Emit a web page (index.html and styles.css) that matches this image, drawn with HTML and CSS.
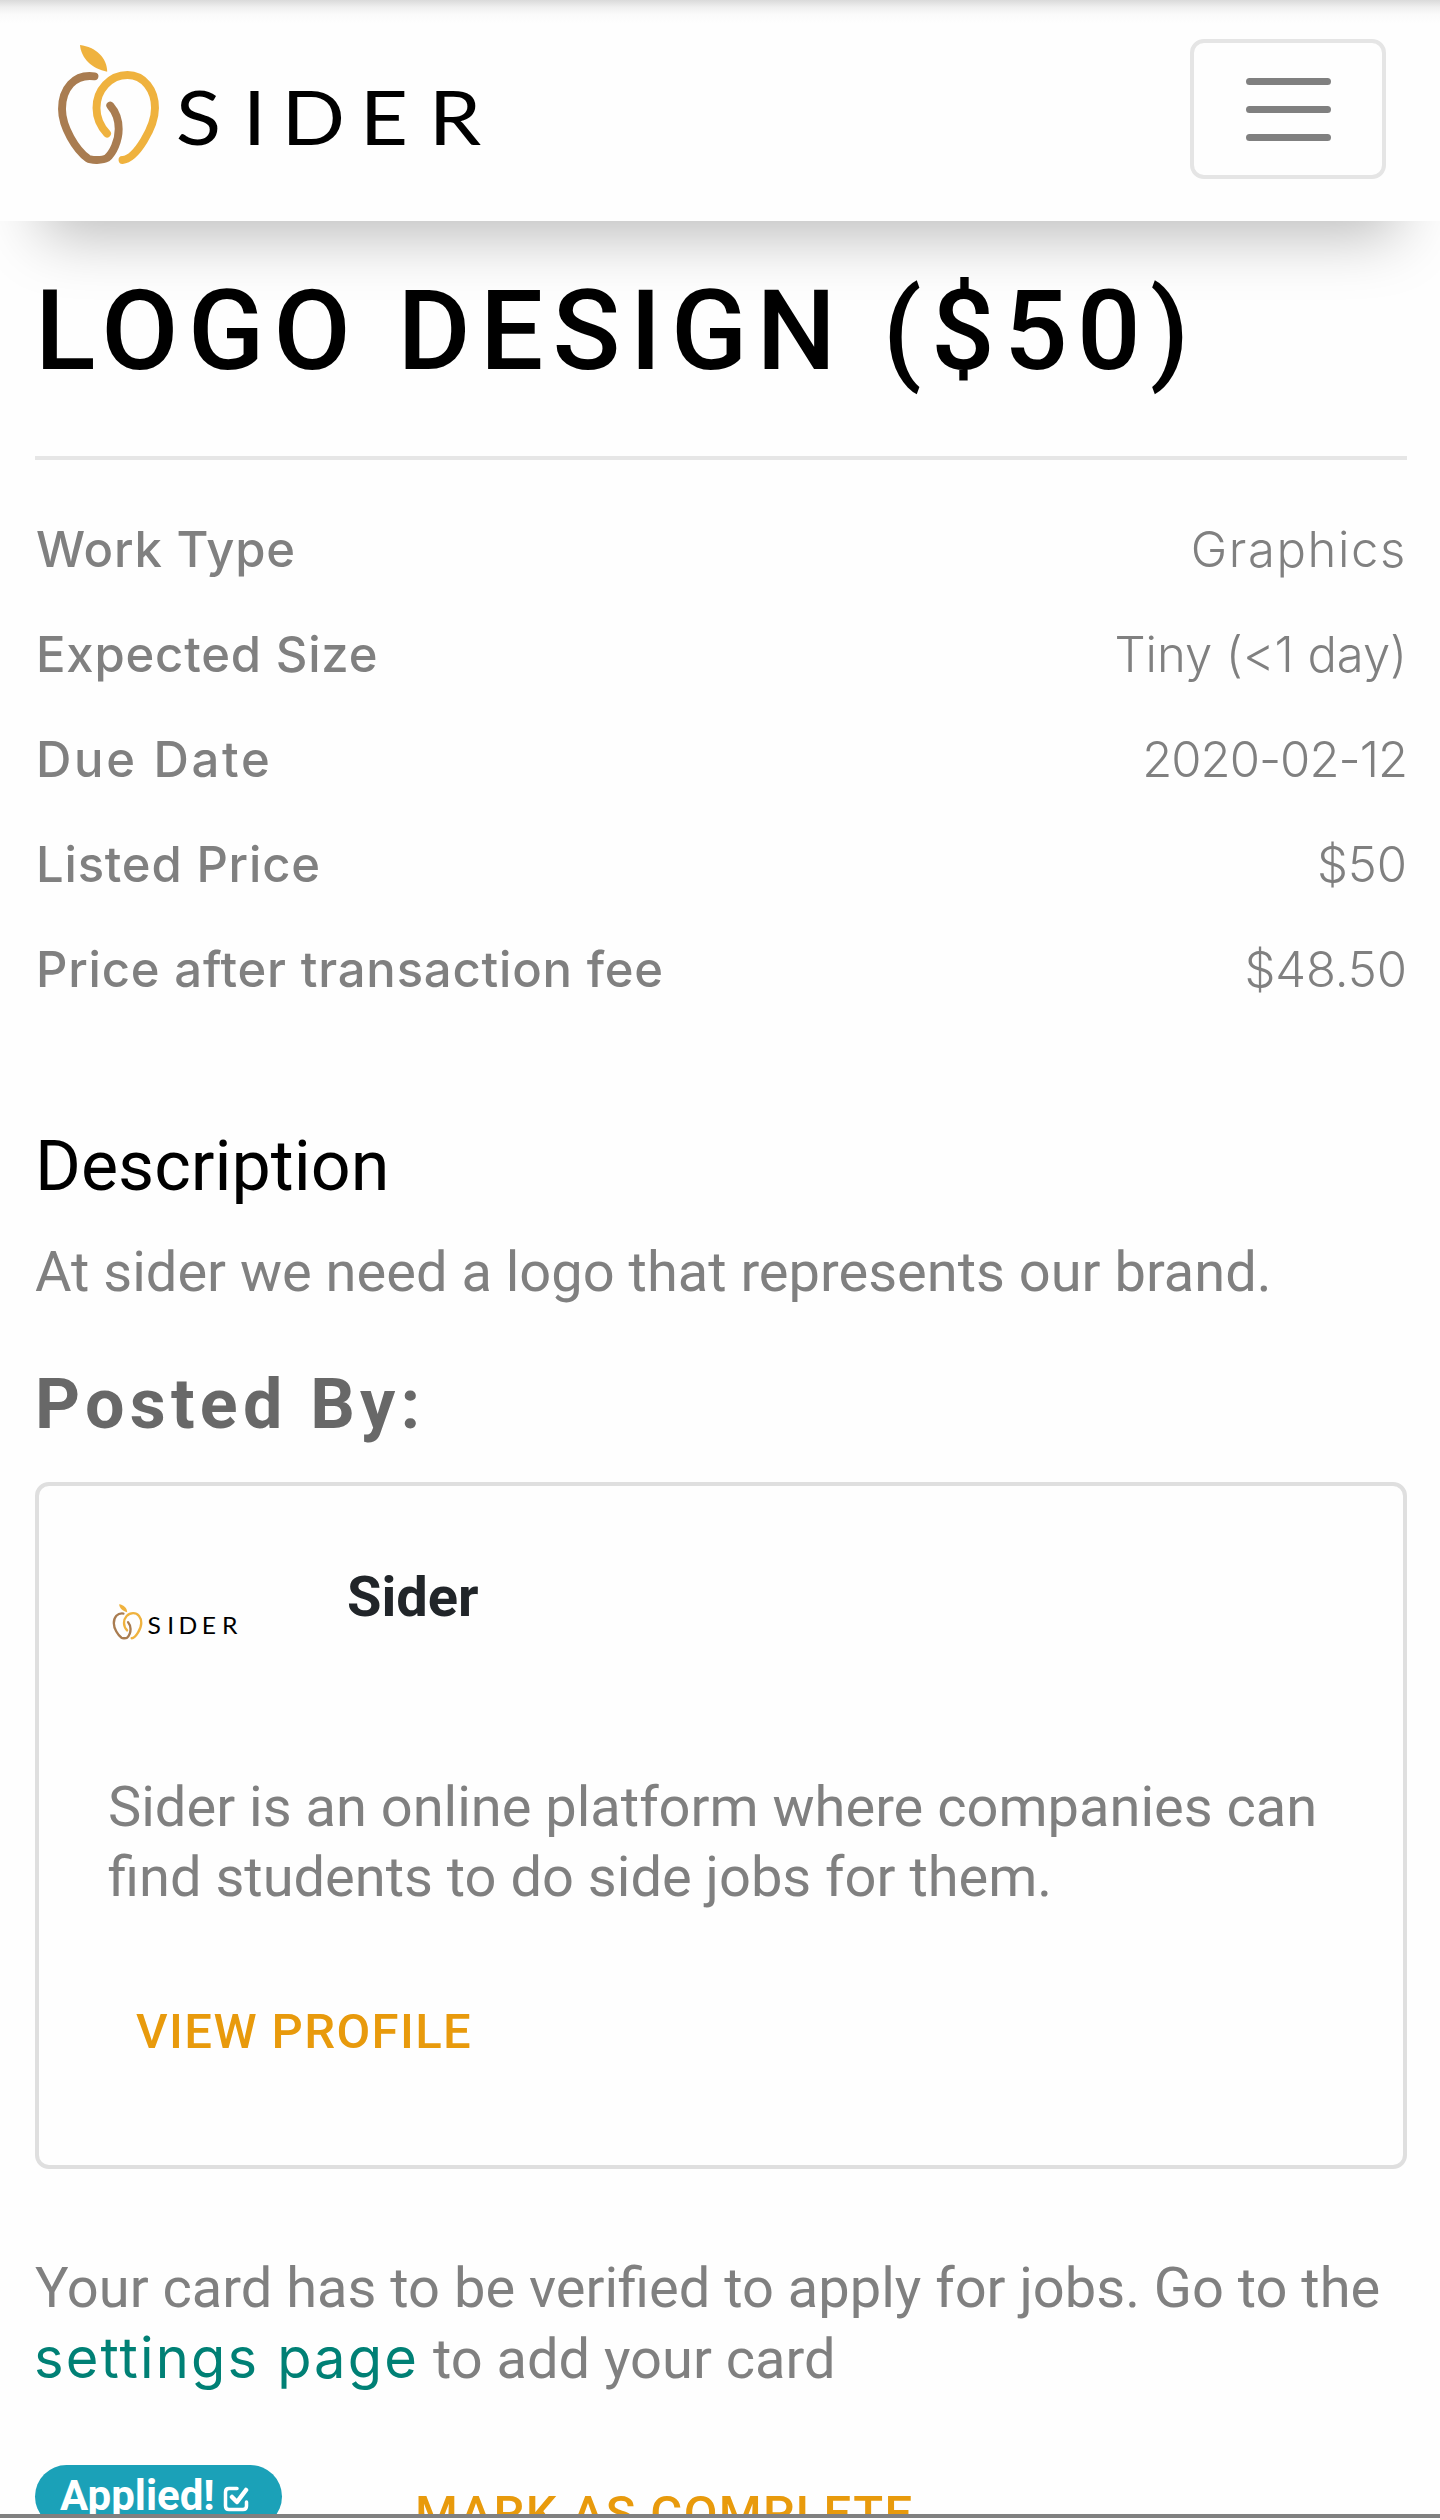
FILE: index.html
```
<!DOCTYPE html>
<html lang="en">
<head>
<meta charset="utf-8">
<title>Sider</title>
<link rel="stylesheet" href="styles.css">
</head>
<body>
<svg class="sprite" aria-hidden="true">
  <symbol id="sider-logo" viewBox="56 44 430 122">
    <path fill="#efb23e" d="M80 45C96 47 107 58 107.200 71.700C92 69 81 58 80 45Z"/>
    <g fill="none" stroke-width="7.900" stroke-linecap="round" stroke-linejoin="round">
      <path stroke="#a97c50" d="M94.500 76.300C74 73.500 62 89 62 109C62 127 76 150 88 158.500C91 160.500 103 160.500 107 158C113 153 118.700 141 118.700 129C118.700 119 115 111 110.300 105.600"/>
      <path stroke="#efb23e" d="M107 133.500C100 126 96.500 117 96.500 108C96.500 90 110 75 127.500 75C144 75 155 90 155 108C155 127 136 159 122.500 160"/>
    </g>
    <text class="wordmark" transform="scale(1.1 1)" x="159.800 220.600 255.800 327 389.700" y="145.300">SIDER</text>
  </symbol>
</svg>

<header class="navbar">
  <svg class="navbar-logo" role="img" aria-label="Sider"><use href="#sider-logo"/></svg>
  <button class="toggler" aria-label="Menu">
    <svg viewBox="0 0 85 64"><path d="M3.500 4.500H81.500M3.500 32.500H81.500M3.500 60.500H81.500"/></svg>
  </button>
</header>

<main class="page">
  <h1 class="title">LOGO DESIGN ($50)</h1>
  <div class="rule"></div>
  <dl class="facts">
    <div class="fact"><dt>Work Type</dt><dd class="word">Graphics</dd></div>
    <div class="fact"><dt>Expected Size</dt><dd>Tiny (&lt;1 day)</dd></div>
    <div class="fact"><dt class="wide">Due Date</dt><dd class="date">2020-02-12</dd></div>
    <div class="fact"><dt>Listed Price</dt><dd>$50</dd></div>
    <div class="fact"><dt>Price after transaction fee</dt><dd>$48.50</dd></div>
  </dl>

  <h2 class="subtitle">Description</h2>
  <p class="text">At sider we need a logo that represents our brand.</p>

  <h2 class="posted">Posted By:</h2>
  <section class="card">
    <div class="card-head">
      <svg class="card-logo" role="img" aria-label="Sider"><use href="#sider-logo"/></svg>
      <h3 class="company">Sider</h3>
    </div>
    <p class="text card-text">Sider is an online platform where companies can find students to do side jobs for them.</p>
    <a class="action">VIEW PROFILE</a>
  </section>

  <p class="text notice">Your card has to be verified to apply for jobs. Go to the <a class="link">settings page</a> to add your card</p>

  <div class="status">
    <span class="badge">Applied!
      <svg viewBox="0 0 26 26"><path d="M14 2.500H6Q2.500 2.500 2.500 6V20Q2.500 23.500 6 23.500H20Q23.500 23.500 23.500 20V16"/><path class="tick" d="M9 11L14 16L23 4"/></svg>
    </span>
    <a class="action">MARK AS COMPLETE</a>
  </div>
</main>
<div class="bottom-edge"></div>
</body>
</html>
```

FILE: styles.css
```
* { box-sizing: border-box; margin: 0; padding: 0; }

body {
  height: 2520px;
  overflow: hidden;
  background: #fefefe;
  color: #808080;
  font-family: Roboto, "Liberation Sans", sans-serif;
}

.sprite { position: absolute; width: 0; height: 0; }
.sprite symbol { overflow: visible; }
.wordmark { font: 400 76px Lato, sans-serif; fill: #000; }

.navbar {
  display: flex;
  justify-content: space-between;
  align-items: flex-start;
  height: 221px;
  padding: 39px 54px 0 56px;
  background: linear-gradient(#dadada, #efefef 7px, #fafafa 14px, #fefefe 23px);
  box-shadow: 0 56px 62px -42px rgba(0, 0, 0, .27);
}
.navbar-logo { width: 430px; height: 122px; margin-top: 5px; overflow: visible; }

.toggler {
  display: flex;
  justify-content: center;
  align-items: center;
  width: 196px;
  height: 140px;
  border: 4px solid #e5e5e5;
  border-radius: 14px;
  background: none;
}
.toggler svg {
  width: 85px;
  height: 64px;
  fill: none;
  stroke: #808080;
  stroke-width: 7;
  stroke-linecap: round;
}

.page { padding: 43px 33px 0 35px; }

.title {
  font-size: 112px;
  font-weight: 500;
  line-height: 134px;
  letter-spacing: 9.400px;
  color: #000;
}
.rule { height: 4px; margin-top: 58px; background: #e6e6e6; }

.facts { margin-top: 37px; }
.fact {
  display: flex;
  justify-content: space-between;
  font: 49px/105px Inter, sans-serif;
}
.fact dt { font-weight: 500; letter-spacing: .8px; margin-left: 1px; }
.fact dt.wide { letter-spacing: 2.700px; }
.fact dd { font-weight: 350; letter-spacing: -.1px; }
.fact dd.word { letter-spacing: 1.600px; }
.fact dd.date { letter-spacing: -1px; }

.subtitle {
  margin-top: 102px;
  font-size: 70px;
  font-weight: 400;
  line-height: 84px;
  color: #000;
}
.text { font-size: 56px; line-height: 70px; }
.subtitle + .text { margin-top: 29px; }

.posted {
  margin-top: 55px;
  font-size: 70px;
  font-weight: 700;
  line-height: 84px;
  letter-spacing: 5.250px;
  color: #686868;
}

.card {
  height: 687px;
  margin-top: 36px;
  padding: 76px 60px 0 69px;
  border: 4px solid #dfdfdf;
  border-radius: 14px;
}
.card-head { display: flex; gap: 108px; height: 210px; }
.card-logo { width: 127px; height: 36px; margin: 42px 0 0 4px; overflow: visible; }
.company { font-size: 56px; line-height: 70px; color: #212529; }

.action {
  font-size: 49px;
  font-weight: 500;
  line-height: 74px;
  letter-spacing: 1.400px;
  color: #e89a0c;
}
.card .action { display: block; margin: 83px 0 0 28px; }

.notice { margin-top: 84px; }
.link {
  margin-left: -1px;
  font-family: Inter, sans-serif;
  letter-spacing: 2.150px;
  color: #008075;
}

.status { display: flex; align-items: flex-start; gap: 133px; margin-top: 71px; }
.badge {
  display: flex;
  align-items: flex-start;
  gap: 8px;
  width: 247px;
  height: 63px;
  padding: 10px 25px;
  border-radius: 35px;
  background: #1ba1b8;
  color: #fff;
  font-size: 42px;
  font-weight: 700;
  line-height: 42px;
}
.badge svg {
  width: 26px;
  height: 26px;
  margin-top: 11px;
  fill: none;
  stroke: #fff;
  stroke-width: 3.500;
  stroke-linecap: round;
}
.badge .tick { stroke-width: 4.500; stroke-linejoin: round; }
.status .action { margin-top: 12px; }

/* divider along the bottom of the viewport */
.bottom-edge {
  position: fixed;
  inset: auto 0 0 0;
  height: 6px;
  border-top: 4px solid #808080;
  background: #fefefe;
}
```
